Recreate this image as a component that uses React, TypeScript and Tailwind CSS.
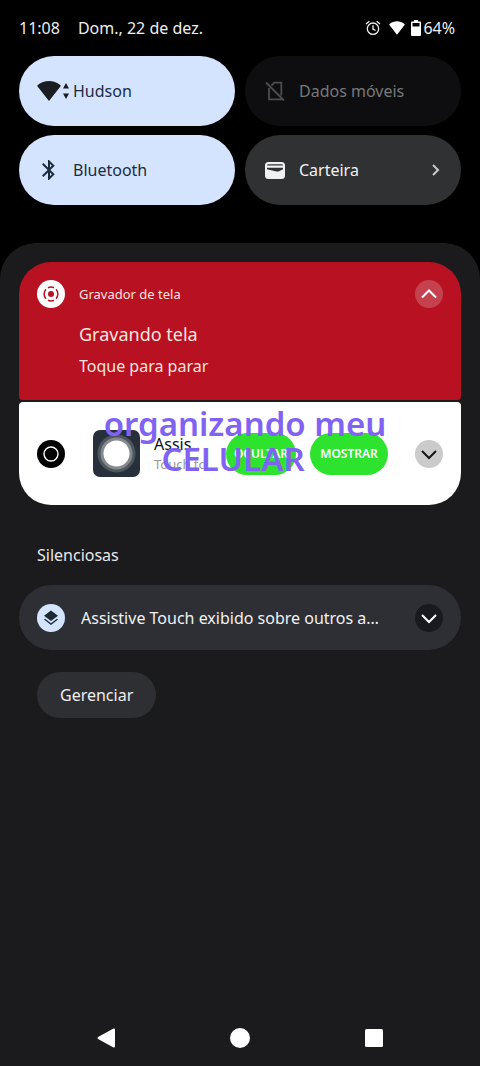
import type { ReactNode } from "react";

const Wifi = ({ className }: { className: string }) => (
  <svg viewBox="0 0 24 20" fill="currentColor" aria-hidden="true" className={className}>
    <path d="M12 20 0.6 5.6C0.2 5 0.3 4.4 0.8 4 4 1.4 8 0 12 0s8 1.4 11.2 4c.5.4.6 1 .2 1.6z" />
  </svg>
);

const WifiTraffic = () => (
  <span className="flex items-center gap-0.5 text-[#191c20]">
    <Wifi className="h-5 w-6 shrink-0" />
    <svg viewBox="0 0 6 16" fill="currentColor" aria-hidden="true" className="h-4 w-1.5 shrink-0">
      <path d="M3 0 6 5.4H0zM3 16 0 10.600H6z" />
    </svg>
  </span>
);

const Bluetooth = () => (
  <svg viewBox="0 0 24 24" fill="currentColor" aria-hidden="true" className="size-6">
    <path d="M17.71 7.71 12 2h-1v7.590L6.410 5 5 6.410 10.590 12 5 17.590 6.410 19 11 14.410V22h1l5.710-5.710L13.410 12zM13 5.830l1.880 1.880L13 9.590zm1.880 10.460L13 18.170v-3.760z" />
  </svg>
);

const NoSim = () => (
  <svg viewBox="0 0 24 24" fill="none" stroke="currentColor" strokeWidth="1.800" aria-hidden="true" className="size-6">
    <path d="M8.500 6.500 11.300 3.700H18.300V16.500M6 9V20.300H18.300V18M3 3.500 21 21.500" />
  </svg>
);

const Wallet = () => (
  <svg viewBox="0 0 20 17" fill="currentColor" aria-hidden="true" className="h-[17px] w-5">
    <path
      fillRule="evenodd"
      d="M3.500 0h13A3.500 3.500 0 0 1 20 3.500v10a3.500 3.500 0 0 1-3.500 3.500h-13A3.500 3.500 0 0 1 0 13.500v-10A3.500 3.500 0 0 1 3.500 0zM3 2.200Q2 2.300 2 3.600H18Q18 2.300 17 2.200zM2 5.800V7.300L11.500 9.400q1.600.4 3-.4L18 7.300V5.800z"
    />
  </svg>
);

const Alarm = () => (
  <svg viewBox="0 0 24 24" fill="none" stroke="currentColor" strokeWidth="2" aria-hidden="true" className="size-4">
    <circle cx="12" cy="13" r="8.500" />
    <path d="M12 8v5.500l3.800 2.300M1.500 6 6.500 1.800M22.500 6l-5-4.200" />
  </svg>
);

const Battery = () => (
  <svg viewBox="0 0 10 16" fill="currentColor" aria-hidden="true" className="h-4 w-2.5">
    <path
      fillRule="evenodd"
      d="M3 0h4v1.500h2a1 1 0 0 1 1 1V15a1 1 0 0 1-1 1H1a1 1 0 0 1-1-1V2.500a1 1 0 0 1 1-1h2zM1.500 3v3.500h7V3z"
    />
  </svg>
);

const Chevron = ({ path, className }: { path: string; className: string }) => (
  <svg viewBox="0 0 16 16" fill="none" stroke="currentColor" strokeWidth="2" aria-hidden="true" className={className}>
    <path d={path} />
  </svg>
);

const UP = "M1 11.500 8 4.500 15 11.500";
const DOWN = "M1 5 8 12 15 5";
const RIGHT = "M6 3 11 8 6 13";

type Tile = {
  label: string;
  icon: ReactNode;
  tone: string;
  pressed?: boolean;
  disabled?: boolean;
  arrow?: boolean;
};

const tiles: Tile[] = [
  { label: "Hudson", icon: <WifiTraffic />, tone: "bg-[#d4e4fe] text-[#1d2b3f]", pressed: true },
  { label: "Dados móveis", icon: <NoSim />, tone: "bg-[#0e0e10] text-[#77787a]", disabled: true },
  { label: "Bluetooth", icon: <Bluetooth />, tone: "bg-[#d4e4fe] text-[#1d2b3f]", pressed: true },
  { label: "Carteira", icon: <Wallet />, tone: "bg-[#303133] text-[#f0f1f3]", arrow: true },
];

const StatusBar = () => (
  <header className="flex h-14 items-center justify-between pr-1.5 text-base text-[#eeeeee]">
    <div className="flex gap-[18px]">
      <span>11:08</span>
      <span>Dom., 22 de dez.</span>
    </div>
    <div className="flex items-center">
      <Alarm />
      <Wifi className="ml-2 h-[14px] w-4 text-white" />
      <span className="ml-1.5 flex text-white">
        <Battery />
      </span>
      <span className="ml-0.5">64%</span>
    </div>
  </header>
);

const QuickTile = ({ tile }: { tile: Tile }) => (
  <button
    type="button"
    aria-pressed={tile.pressed}
    disabled={tile.disabled}
    className={`flex h-[70px] items-center rounded-full px-[18px] text-base ${tile.tone}`}
  >
    <span
      className={`flex w-9 shrink-0 items-center ${tile.disabled ? "opacity-60" : ""} ${tile.label === "Hudson" ? "" : "justify-center pr-3"}`}
    >
      {tile.icon}
    </span>
    <span className="flex-1 text-left">{tile.label}</span>
    {tile.arrow && <Chevron path={RIGHT} className="size-4 text-[#c8c9cb]" />}
  </button>
);

const Expand = ({ label, up, tone }: { label: string; up?: boolean; tone: string }) => (
  <button
    type="button"
    aria-label={label}
    className={`flex size-7 shrink-0 items-center justify-center rounded-full ${tone}`}
  >
    <Chevron path={up ? UP : DOWN} className="size-4" />
  </button>
);

const RecorderCard = () => (
  <article className="flex items-start rounded-t-[32px] rounded-b-[4px] bg-[#b71122] px-[18px] pt-[18px] pb-[22px] text-[#fbe4de]">
    <span className="flex size-7 shrink-0 items-center justify-center rounded-full bg-white text-[#b71122]">
      <svg viewBox="0 0 16 16" fill="none" stroke="currentColor" strokeWidth="1.500" aria-hidden="true" className="size-4">
        <circle cx="8" cy="8" r="3" fill="currentColor" stroke="none" />
        <path d="M5 1.700Q8 .3 11 1.700M5 14.300Q8 15.700 11 14.300M2.900 3.300Q-.7 8 2.900 12.700M13.100 3.300Q16.700 8 13.100 12.700" />
      </svg>
    </span>
    <div className="ml-[14px] flex-1">
      <p className="text-[13px] leading-7">Gravador de tela</p>
      <h2 className="mt-[14px] text-[18px] leading-6">Gravando tela</h2>
      <p className="mt-2 text-base leading-6">Toque para parar</p>
    </div>
    <Expand label="Recolher" up tone="bg-[#c6414e] text-white" />
  </article>
);

const AssistiveCard = () => (
  <article className="relative mt-0.5 flex h-[103px] items-center rounded-t-[4px] rounded-b-[32px] bg-white px-[18px]">
    <span className="flex size-7 shrink-0 items-center justify-center rounded-full bg-black text-white">
      <svg viewBox="0 0 16 16" fill="none" stroke="currentColor" strokeWidth="1.400" aria-hidden="true" className="size-4">
        <circle cx="8" cy="8" r="7" />
      </svg>
    </span>
    <svg viewBox="0 0 47 47" aria-hidden="true" className="ml-7 size-[47px] shrink-0">
      <rect width="47" height="47" rx="7" fill="#27303a" />
      <circle cx="23.500" cy="23.500" r="19" fill="#4f565e" />
      <circle cx="23.500" cy="23.500" r="16" fill="#858a8f" />
      <circle cx="23.500" cy="23.500" r="13" fill="#fff" />
    </svg>
    <div className="ml-[14px] w-[54px] shrink-0">
      <h2 className="text-base leading-5 whitespace-nowrap text-[#111111]">Assis..</h2>
      <p className="text-[13px] leading-5 whitespace-nowrap text-[#999999]">Touch to</p>
    </div>
    <div className="ml-[18px] flex flex-1 gap-[14px] text-xs font-semibold text-white">
      <button type="button" className="h-[42px] w-[70px] rounded-full bg-[#2de32e]">
        OCULTAR
      </button>
      <button type="button" className="h-[42px] w-[78px] rounded-full bg-[#2de32e]">
        MOSTRAR
      </button>
    </div>
    <Expand label="Expandir" tone="bg-[#cbcbcb] text-[#151515]" />

    {/* video caption sits over the notification */}
    <p className="pointer-events-none absolute inset-x-0 top-1 pl-2.5 text-center text-[33px] leading-[35px] font-semibold text-[#8163f3]">
      <span className="block whitespace-nowrap">organizando meu</span>
      <span className="block pr-6">CELULAR</span>
    </p>
  </article>
);

const SilentCard = () => (
  <article className="flex h-[65px] items-center rounded-full bg-[#2e2f34] px-[18px]">
    <span className="flex size-7 shrink-0 items-center justify-center rounded-full bg-[#d4e4fe] text-[#1c2a35]">
      <svg viewBox="0 0 16 16" fill="currentColor" aria-hidden="true" className="size-4">
        <path d="M8 .5 15 5.800 8 11 1 5.800zM8 13.200 13.900 8.700 15 9.600 8 15 1 9.600 2.100 8.700z" />
      </svg>
    </span>
    <h2 className="mr-7 ml-4 flex-1 truncate text-base text-[#f1f1f3]">
      Assistive Touch exibido sobre outros apps
    </h2>
    <Expand label="Expandir" tone="bg-[#191a1f] text-white" />
  </article>
);

const NavBar = () => (
  <nav className="mt-auto flex h-14 items-center justify-center gap-[110px] text-white">
    <button type="button" aria-label="Voltar">
      <svg viewBox="0 0 24 24" fill="currentColor" stroke="currentColor" strokeWidth="2" strokeLinejoin="round" aria-hidden="true" className="size-6">
        <path d="M20 3.500V20.500L4.500 12z" />
      </svg>
    </button>
    <button type="button" aria-label="Início">
      <svg viewBox="0 0 24 24" fill="currentColor" aria-hidden="true" className="size-6">
        <circle cx="12" cy="12" r="10" />
      </svg>
    </button>
    <button type="button" aria-label="Recentes">
      <svg viewBox="0 0 24 24" fill="currentColor" aria-hidden="true" className="size-6">
        <rect x="3" y="3" width="18" height="18" rx="1.500" />
      </svg>
    </button>
  </nav>
);

export default function App() {
  return (
    <div className="flex min-h-screen flex-col bg-black font-['Noto_Sans',sans-serif]">
      <div className="px-[19px]">
        <StatusBar />
        <section className="grid grid-cols-2 gap-x-2.5 gap-y-[9px]">
          {tiles.map((tile) => (
            <QuickTile key={tile.label} tile={tile} />
          ))}
        </section>
      </div>

      <main className="mt-[38px] flex flex-1 flex-col rounded-t-[36px] bg-[#1b1b1d] px-[19px] pt-[19px]">
        <RecorderCard />
        <AssistiveCard />
        <h3 className="mt-[38px] mb-[18px] pl-[18px] text-base leading-6 text-[#e8e8ea]">Silenciosas</h3>
        <SilentCard />
        <button
          type="button"
          className="mt-[22px] ml-[18px] h-[46px] self-start rounded-full bg-[#2e2f32] px-[23px] text-base text-[#eeeeef]"
        >
          Gerenciar
        </button>
        <NavBar />
      </main>
    </div>
  );
}
